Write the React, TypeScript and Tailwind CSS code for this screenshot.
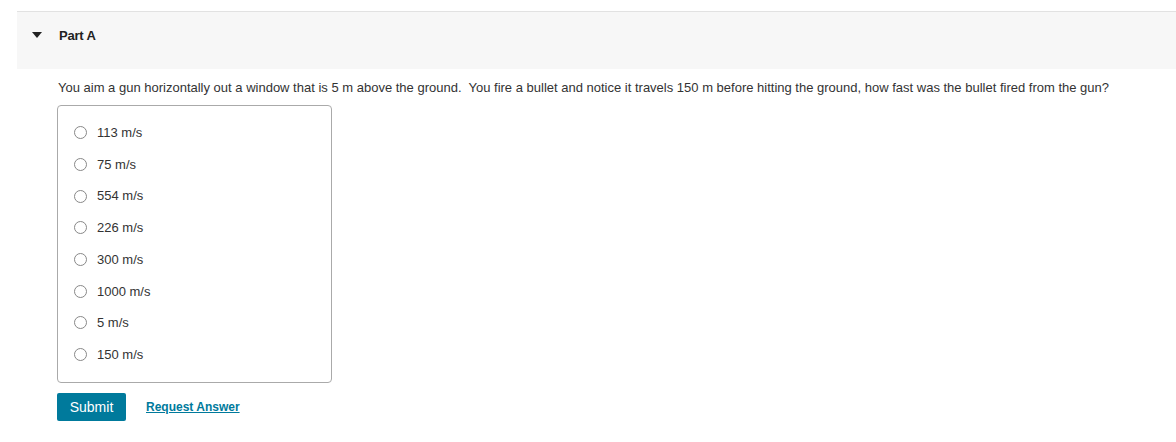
import React from "react";

const options = ["113 m/s", "75 m/s", "554 m/s", "226 m/s", "300 m/s", "1000 m/s", "5 m/s", "150 m/s"];

export default function App() {
  return (
    <div className="w-[1176px] h-[442px] bg-white pt-[11px] font-['Liberation_Sans',Arial,sans-serif] text-[#333]">
      <div className="ml-[17px] border-t border-[#e2e2e2] bg-[#f7f7f7] h-[58px] flex items-start pt-[14px]">
        <svg width="10" height="6" viewBox="0 0 10 6" className="ml-[15px] mt-[6px]">
          <polygon points="0,0 10,0 5,6" fill="#222" />
        </svg>
        <span className="ml-[17px] text-[13px] font-bold text-[#222] tracking-[-0.2px]">Part A</span>
      </div>
      <div className="pl-[58px]">
        <p className="mt-[11px] text-[13px] leading-[16px] text-[#333]">
          You aim a gun horizontally out a window that is 5 m above the ground.&nbsp; You fire a bullet and notice it travels 150 m before hitting the ground, how fast was the bullet fired from the gun?
        </p>
        <div className="-ml-px mt-[9px] w-[275px] h-[278px] rounded-[4px] border border-[#aaa] pt-[11px] pl-[16px]">
          {options.map((o) => (
            <label key={o} className="flex items-center h-[31.7px]">
              <span className="w-[13px] h-[13px] rounded-full border border-[#888] bg-white" />
              <span className="ml-[10px] text-[13px] text-[#333]">{o}</span>
            </label>
          ))}
        </div>
        <div className="flex items-center mt-[10px]">
          <button className="-ml-px h-[28px] w-[69px] rounded-[2px] bg-[#007a9c] text-white text-[14px]">Submit</button>
          <a href="#" className="ml-[20px] text-[12px] font-bold underline text-[#007a9c]">Request Answer</a>
        </div>
      </div>
    </div>
  );
}
